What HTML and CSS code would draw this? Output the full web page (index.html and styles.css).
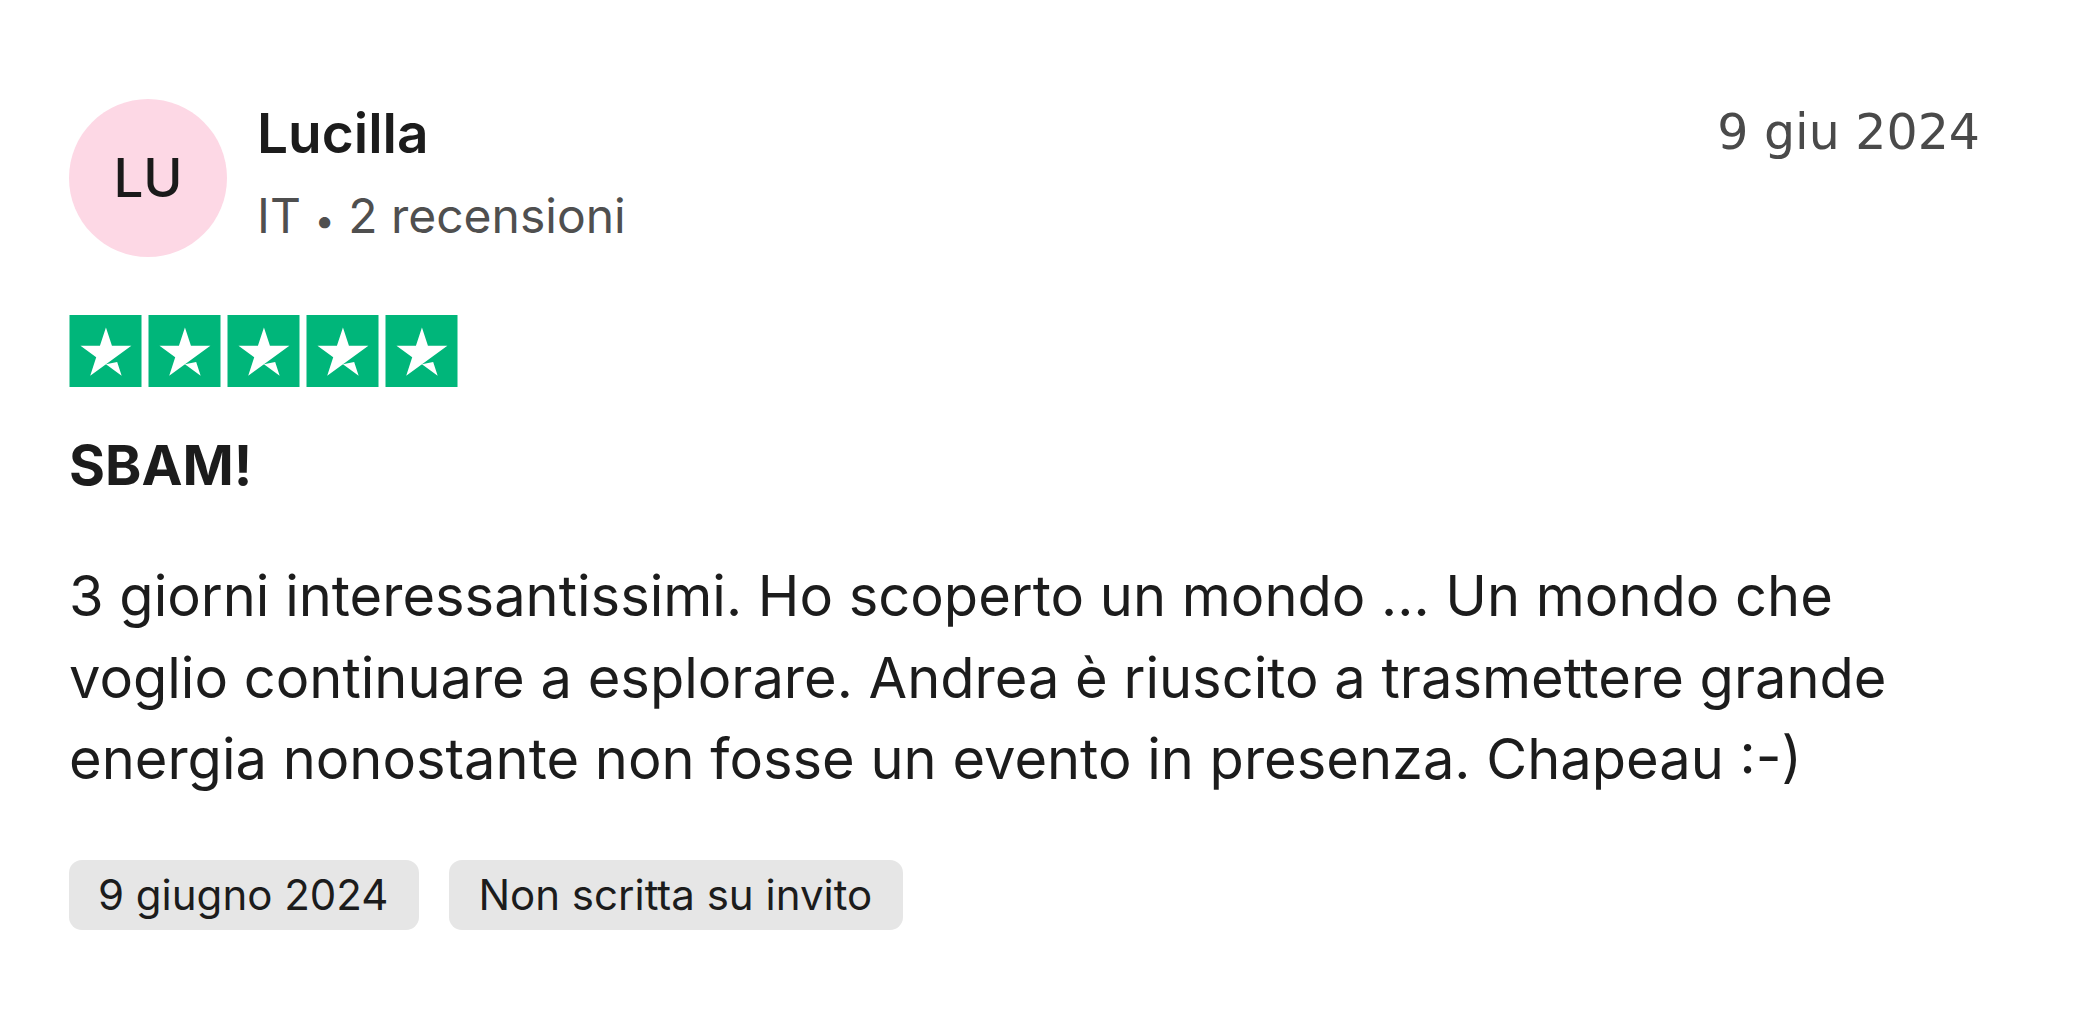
FILE: index.html
```html
<!DOCTYPE html>
<html lang="it">
<head>
<meta charset="utf-8">
<title>Recensione</title>
<link rel="stylesheet" href="styles.css">
</head>
<body>
<article class="review">
  <header class="head">
    <div class="avatar">LU</div>
    <div class="who">
      <div class="name">Lucilla</div>
      <div class="meta">IT <span class="dot">•</span> 2 recensioni</div>
    </div>
    <time class="date">9 giu 2024</time>
  </header>
  <div class="stars">
    <svg class="star" viewBox="0 0 46 46"><rect width="46" height="46" fill="#00b67a"/><path fill="#fff" d="M39.53 19.71L13.23 38.8l3.84-11.8-10.05-7.29h12.42l3.84-11.8 3.84 11.8zM23.28 31.51l7.18-1.51 2.86 8.8z"/></svg>
    <svg class="star" viewBox="0 0 46 46"><rect width="46" height="46" fill="#00b67a"/><path fill="#fff" d="M39.53 19.71L13.23 38.8l3.84-11.8-10.05-7.29h12.42l3.84-11.8 3.84 11.8zM23.28 31.51l7.18-1.51 2.86 8.8z"/></svg>
    <svg class="star" viewBox="0 0 46 46"><rect width="46" height="46" fill="#00b67a"/><path fill="#fff" d="M39.53 19.71L13.23 38.8l3.84-11.8-10.05-7.29h12.42l3.84-11.8 3.84 11.8zM23.28 31.51l7.18-1.51 2.86 8.8z"/></svg>
    <svg class="star" viewBox="0 0 46 46"><rect width="46" height="46" fill="#00b67a"/><path fill="#fff" d="M39.53 19.71L13.23 38.8l3.84-11.8-10.05-7.29h12.42l3.84-11.8 3.84 11.8zM23.28 31.51l7.18-1.51 2.86 8.8z"/></svg>
    <svg class="star" viewBox="0 0 46 46"><rect width="46" height="46" fill="#00b67a"/><path fill="#fff" d="M39.53 19.71L13.23 38.8l3.84-11.8-10.05-7.29h12.42l3.84-11.8 3.84 11.8zM23.28 31.51l7.18-1.51 2.86 8.8z"/></svg>
  </div>
  <h2 class="title">SBAM!</h2>
  <p class="body">3 giorni interessantissimi. Ho scoperto un mondo ... Un mondo che voglio continuare a esplorare. Andrea è riuscito a trasmettere grande energia nonostante non fosse un evento in presenza. Chapeau :-)</p>
  <div class="tags">
    <span class="tag">9 giugno 2024</span>
    <span class="tag">Non scritta su invito</span>
  </div>
</article>
</body>
</html>
```
FILE: styles.css
```css
html, body {
  margin: 0;
  padding: 0;
  background: #ffffff;
}
body {
  font-family: Inter, "Noto Sans", "Liberation Sans", sans-serif;
  color: #1c1c1c;
}
.review {
  width: 1911px;
  padding: 99px 0 0 69px;
}
.head {
  display: flex;
  align-items: flex-start;
}
.avatar {
  width: 158px;
  height: 158px;
  border-radius: 50%;
  background: #fdd8e5;
  display: flex;
  align-items: center;
  justify-content: center;
  font-size: 53px;
  font-weight: 500;
  color: #1a1a1a;
  flex: none;
}
.who {
  margin-left: 30px;
  padding-top: 2px;
}
.name {
  font-size: 55px;
  line-height: 65px;
  font-weight: 600;
  color: #1c1c1c;
}
.meta {
  margin-top: 18px;
  font-size: 48px;
  line-height: 64px;
  color: #4f4f4f;
}
.dot {
  font-size: 36px;
}
.date {
  margin-left: auto;
  margin-top: 5px;
  font-family: "DejaVu Sans", Verdana, sans-serif;
  font-size: 49px;
  line-height: 57px;
  color: #4a4a4a;
}
.stars {
  display: flex;
  gap: 6px;
  margin-top: 58px;
}
.star {
  width: 73px;
  height: 72px;
  display: block;
}
.title {
  margin: 37px 0 0;
  font-size: 55px;
  line-height: 82px;
  font-weight: 700;
  color: #1c1c1c;
}
.body {
  margin: 50px 0 0;
  font-size: 56px;
  line-height: 81.5px;
  color: #1c1c1c;
}
.tags {
  display: flex;
  gap: 30px;
  margin-top: 59px;
}
.tag {
  height: 70px;
  display: flex;
  align-items: center;
  padding: 0 31px 0 29px;
  border-radius: 13px;
  background: #e6e6e6;
  font-size: 42px;
  color: #1c1c1c;
}
```
